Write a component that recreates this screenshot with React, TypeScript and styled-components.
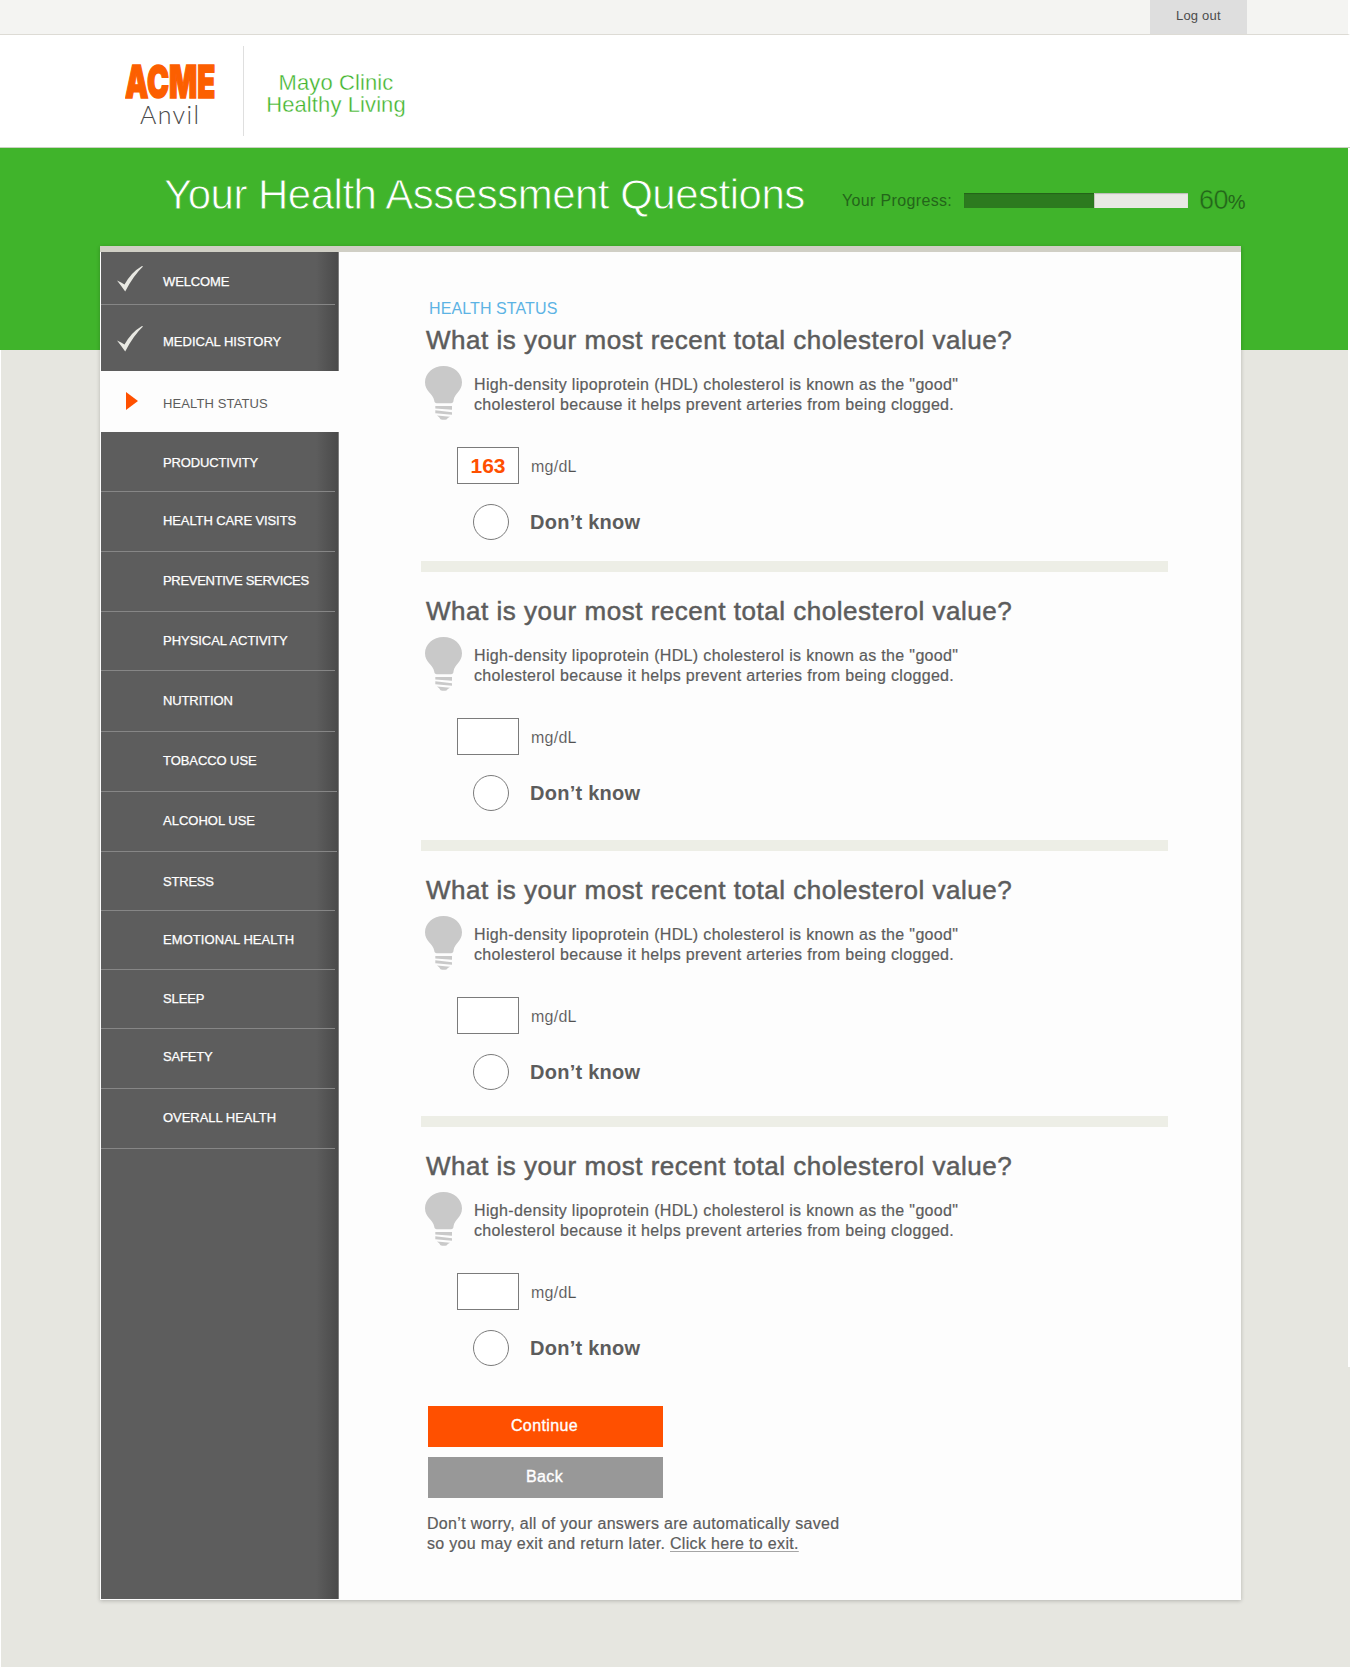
import React from "react";
import styled, { createGlobalStyle } from "styled-components";

const GREEN = "#40b42b";
const PAPER = "#fdfdfd";

const GlobalStyle = createGlobalStyle`
  *, *::before, *::after { box-sizing: border-box; }
  body {
    margin: 0;
    background: #e6e6e0;
    font-family: "Liberation Sans", Arial, Helvetica, sans-serif;
    color: #5c5c5c;
  }
  h1, h2, p, ul { margin: 0; padding: 0; }
`;

const Page = styled.div`
  width: 1350px;
  height: 1667px;
  display: flex;
  flex-direction: column;
`;

const TopBar = styled.div`
  height: 35px;
  padding-right: 101px;
  display: flex;
  justify-content: flex-end;
  background: #f4f4f2;
  border-bottom: 1px solid #dddbd5;
  border-right: 2px solid #fff;
`;

const LogOut = styled.a`
  width: 97px;
  height: 34px;
  padding-left: 26px;
  font-size: 13px;
  line-height: 31px;
  letter-spacing: 0.2px;
  color: #4c4c4c;
  background: #dedede;
`;

const Masthead = styled.header`
  height: 113px;
  padding: 11px 0 0 125px;
  display: flex;
  background: #fff;
  border-bottom: 1px solid #cbd0c3;
`;

const AcmeLogo = styled.div`
  width: 119px;
  height: 90px;
  padding-top: 14px;
  border-right: 1px solid #dfdfdf;
`;

const AcmeWord = styled.div`
  height: 42px;
  font-family: Inter, sans-serif;
  font-weight: 900;
  font-size: 45px;
  line-height: 43px;
  letter-spacing: 0;
  color: #fc5f00;
  -webkit-text-stroke: 1.6px #fc5f00;
  transform: scaleX(0.655);
  transform-origin: 0 50%;
`;

const AnvilWord = styled.div`
  padding-left: 15px;
  font-family: Lato, sans-serif;
  font-weight: 300;
  font-size: 25px;
  line-height: 24px;
  letter-spacing: 1.4px;
  color: #4a4a4a;
`;

const ClinicName = styled.div`
  width: 150px;
  margin: 26px 0 0 17px;
  text-align: center;
  font-size: 22px;
  line-height: 22px;
  letter-spacing: 0.1px;
  color: ${GREEN};
  -webkit-text-stroke: 0.35px #fff;
`;

const Main = styled.main`
  flex: 1;
  padding-left: 100px;
  background:
    linear-gradient(#fff, #fff) right top / 2px 1219px no-repeat,
    linear-gradient(${GREEN}, ${GREEN}) 0 0 / 100% 202px no-repeat,
    linear-gradient(#fff, #fff) 0 202px / 1px 100% no-repeat;
`;

const Hero = styled.div`
  height: 98px;
  padding: 22px 0 0 64px;
  display: flex;
  align-items: flex-start;
`;

const Title = styled.h1`
  width: 678px;
  font-weight: 400;
  font-size: 42px;
  line-height: 50px;
  letter-spacing: -0.5px;
  white-space: nowrap;
  color: #fff;
  -webkit-text-stroke: 0.8px ${GREEN};
`;

const Progress = styled.div`
  height: 20px;
  margin-top: 20px;
  display: flex;
  align-items: center;
  color: #24651a;
`;

const ProgressLabel = styled.span`
  width: 122px;
  padding-top: 1px;
  font-size: 16px;
  letter-spacing: 0.35px;
`;

const Track = styled.div`
  width: 224px;
  height: 15px;
  background: #e9e9e3;
  box-shadow: inset 0 1px 1px rgba(0, 0, 0, 0.2);
`;

const Fill = styled.div`
  height: 15px;
  background: #2c7a1f;
  border-right: 1px solid #c5c8bb;
  box-shadow: inset 0 1px 1px rgba(0, 0, 0, 0.2);
`;

const Percent = styled.span`
  margin-left: 11px;
  font-size: 27px;
  letter-spacing: -0.6px;
  -webkit-text-stroke: 0.5px ${GREEN};
  small {
    font-size: 20px;
    -webkit-text-stroke: 0;
  }
`;

const Card = styled.div`
  width: 1141px;
  height: 1354px;
  display: flex;
  background: ${PAPER};
  border-top: 6px solid #d0cfc5;
  box-shadow: 0 1px 4px rgba(0, 0, 0, 0.22);
`;

const Sidebar = styled.ul`
  width: 239px;
  height: 1347px;
  list-style: none;
  background:
    linear-gradient(${PAPER}, ${PAPER}) 0 0 / 1px 100% no-repeat,
    linear-gradient(#7f7f7f, #7f7f7f) 100% 0 / 1px 100% no-repeat,
    linear-gradient(90deg, #5d5d5d 0, #5d5d5d 216px, #4a4a4a 238px);
`;

const NavItem = styled.li<{
  $h: number;
  $pad: number;
  $line?: number;
  $spacing?: number;
  $active?: boolean;
}>`
  height: ${(p) => p.$h}px;
  padding-top: ${(p) => p.$pad}px;
  display: grid;
  grid-template-columns: 63px 1fr;
  align-items: start;
  font-size: 13px;
  line-height: 16px;
  letter-spacing: ${(p) => p.$spacing ?? -0.12}px;
  white-space: nowrap;
  color: ${(p) => (p.$active ? "#5c5c5c" : "#fff")};
  -webkit-text-stroke: ${(p) => (p.$active ? "0" : "0.25px #fff")};
  background: ${(p) =>
    p.$active
      ? PAPER
      : `linear-gradient(#868686, #868686) 1px 100% / ${p.$line ?? 0}px 1px no-repeat`};
`;

const Mark = styled.span<{ $left: number; $up: number }>`
  height: 16px;
  margin-top: -${(p) => p.$up}px;
  padding-left: ${(p) => p.$left}px;
  display: flex;
  align-items: center;
  svg { flex: none; display: block; }
`;

const Content = styled.section`
  flex: 1;
  padding: 47px 0 0 82px;
`;

const Eyebrow = styled.p`
  height: 26px;
  padding-left: 8px;
  font-size: 16px;
  line-height: 20px;
  letter-spacing: 0.1px;
  color: #5cb3e4;
`;

const Question = styled.div`
  height: 215px;
`;

const QuestionTitle = styled.h2`
  padding-left: 5px;
  font-weight: 400;
  font-size: 26px;
  line-height: 30px;
  letter-spacing: 0.52px;
  -webkit-text-stroke: 0.5px #5c5c5c;
`;

const Hint = styled.div`
  margin-top: 11px;
  padding-left: 4px;
  display: flex;
  svg { display: block; }
`;

const HintText = styled.p`
  margin: 9px 0 0 12px;
  font-size: 16px;
  line-height: 20px;
  letter-spacing: 0.34px;
  -webkit-text-stroke: 0.2px #5c5c5c;
`;

const Answer = styled.label`
  margin-top: 27px;
  padding-left: 36px;
  display: flex;
  align-items: center;
`;

const ValueBox = styled.span`
  width: 62px;
  height: 37px;
  text-align: center;
  font-weight: 700;
  font-size: 21px;
  line-height: 36px;
  color: #ff5000;
  background: #fff;
  border: 1px solid #7b7b7b;
`;

const Unit = styled.span`
  margin-left: 12px;
  padding-top: 2px;
  font-size: 16px;
  letter-spacing: 0.25px;
  color: #505050;
  -webkit-text-stroke: 0.15px ${PAPER};
`;

const Unknown = styled.label`
  margin-top: 20px;
  padding-left: 52px;
  display: flex;
  align-items: center;
  font-weight: 700;
  font-size: 20px;
  line-height: 34px;
  letter-spacing: 0.25px;
`;

const Radio = styled.span`
  width: 36px;
  height: 36px;
  margin-right: 21px;
  background: #fff;
  border: 1px solid #7b7b7b;
  border-radius: 50%;
`;

const Rule = styled.div<{ $gap: number }>`
  width: 747px;
  height: 11px;
  margin: ${(p) => p.$gap}px 0 24px;
  background: #edeee6;
`;

const Actions = styled.div`
  margin: 40px 0 0 7px;
  display: flex;
  flex-direction: column;
  gap: 10px;
`;

const Button = styled.button<{ $tone: string }>`
  width: 235px;
  height: 41px;
  padding: 0 2px 2px 0;
  border: 0;
  font-family: inherit;
  font-size: 16px;
  letter-spacing: 0.4px;
  color: #fff;
  background: ${(p) => p.$tone};
  -webkit-text-stroke: 0.35px #fff;
`;

const SaveNote = styled.p`
  margin: 16px 0 0 6px;
  font-size: 16px;
  line-height: 20px;
  letter-spacing: 0.32px;
  -webkit-text-stroke: 0.2px #5c5c5c;
`;

const ExitLink = styled.a`
  text-decoration: underline;
  text-decoration-color: #a5a5a5;
  text-decoration-thickness: 1px;
  text-decoration-skip-ink: none;
  text-underline-offset: 2px;
`;

const Check = () => (
  <svg width="26" height="26" viewBox="0 0 26 26" fill="#e8e8e2">
    <path d="M0 14.4Q4.500 16.200 7.500 18.600Q14 6.500 25 0L26 .6Q16.500 9.500 8.200 25.600Q4.500 20 0 14.400Z" />
  </svg>
);

const Arrow = () => (
  <svg width="12" height="18" viewBox="0 0 12 18" fill="#ff5000">
    <path d="M0 0L12 9L0 18Z" />
  </svg>
);

const Bulb = () => (
  <svg width="37" height="54" viewBox="0 0 37 54" fill="#c9c9c9">
    <path d="M18.500 0C29 0 37 7.400 37 16.300C37 25.500 29.200 27.500 28.500 34.500Q28.300 37.300 26 37.300H11.800Q9.500 37.300 9.200 34.500C8 27.500 0 25.500 0 16.300C0 7.400 8 0 18.500 0Z" />
    <path d="M10.300 40H27V43.800L10.300 42.500Z" />
    <path d="M10.300 44.200L27 46.200V48.800L10.300 47.300Z" />
    <path d="M12 49.600L25 50.700Q22.500 51.800 21.500 53.400Q18.500 54.400 15.500 53.200Q14.500 51.500 12 49.600Z" />
  </svg>
);

type Nav = {
  label: string;
  h: number;
  pad: number;
  line?: number;
  spacing?: number;
  mark?: "check" | "arrow";
};

const NAV: Nav[] = [
  { label: "WELCOME", h: 53, pad: 22, line: 234, mark: "check" },
  { label: "MEDICAL HISTORY", h: 66, pad: 29, spacing: 0, mark: "check" },
  { label: "HEALTH STATUS", h: 61, pad: 25, spacing: 0.12, mark: "arrow" },
  { label: "PRODUCTIVITY", h: 60, pad: 23, line: 234, spacing: -0.15 },
  { label: "HEALTH CARE VISITS", h: 60, pad: 21, line: 234, spacing: -0.1 },
  { label: "PREVENTIVE SERVICES", h: 60, pad: 21, line: 234, spacing: -0.3 },
  { label: "PHYSICAL ACTIVITY", h: 59, pad: 21, line: 234, spacing: -0.03 },
  { label: "NUTRITION", h: 61, pad: 22, line: 234 },
  { label: "TOBACCO USE", h: 60, pad: 21, line: 236, spacing: -0.07 },
  { label: "ALCOHOL USE", h: 60, pad: 21, line: 236, spacing: 0 },
  { label: "STRESS", h: 59, pad: 22, line: 234, spacing: -0.2 },
  { label: "EMOTIONAL HEALTH", h: 59, pad: 21, line: 234, spacing: 0.07 },
  { label: "SLEEP", h: 59, pad: 21, line: 234 },
  { label: "SAFETY", h: 60, pad: 20, line: 234, spacing: -0.2 },
  { label: "OVERALL HEALTH", h: 60, pad: 21, line: 234, spacing: -0.03 },
];

const QUESTIONS = [
  { value: "163", gap: 21 },
  { value: "", gap: 29 },
  { value: "", gap: 26 },
  { value: "", gap: 0 },
];

const PROGRESS = 58.5;

export default function App() {
  return (
    <Page>
      <GlobalStyle />
      <TopBar>
        <LogOut>Log out</LogOut>
      </TopBar>
      <Masthead>
        <AcmeLogo>
          <AcmeWord>ACME</AcmeWord>
          <AnvilWord>Anvil</AnvilWord>
        </AcmeLogo>
        <ClinicName>
          Mayo Clinic
          <br />
          Healthy Living
        </ClinicName>
      </Masthead>
      <Main>
        <Hero>
          <Title>Your Health Assessment Questions</Title>
          <Progress>
            <ProgressLabel>Your Progress:</ProgressLabel>
            <Track>
              <Fill style={{ width: `${PROGRESS}%` }} />
            </Track>
            <Percent>
              60<small>%</small>
            </Percent>
          </Progress>
        </Hero>
        <Card>
          <Sidebar>
            {NAV.map((n) => (
              <NavItem
                key={n.label}
                $h={n.h}
                $pad={n.pad}
                $line={n.line}
                $spacing={n.spacing}
                $active={n.mark === "arrow"}
              >
                <Mark $left={n.mark === "arrow" ? 26 : 17} $up={3}>
                  {n.mark === "check" && <Check />}
                  {n.mark === "arrow" && <Arrow />}
                </Mark>
                {n.label}
              </NavItem>
            ))}
          </Sidebar>
          <Content>
            <Eyebrow>HEALTH STATUS</Eyebrow>
            {QUESTIONS.map((q, i) => (
              <React.Fragment key={i}>
                <Question>
                  <QuestionTitle>What is your most recent total cholesterol value?</QuestionTitle>
                  <Hint>
                    <Bulb />
                    <HintText>
                      High-density lipoprotein (HDL) cholesterol is known as the "good"
                      <br />
                      cholesterol because it helps prevent arteries from being clogged.
                    </HintText>
                  </Hint>
                  <Answer>
                    <ValueBox>{q.value}</ValueBox>
                    <Unit>mg/dL</Unit>
                  </Answer>
                  <Unknown>
                    <Radio />
                    Don’t know
                  </Unknown>
                </Question>
                {q.gap > 0 && <Rule $gap={q.gap} />}
              </React.Fragment>
            ))}
            <Actions>
              <Button $tone="#ff5000">Continue</Button>
              <Button $tone="#989898">Back</Button>
            </Actions>
            <SaveNote>
              Don’t worry, all of your answers are automatically saved
              <br />
              so you may exit and return later. <ExitLink>Click here to exit.</ExitLink>
            </SaveNote>
          </Content>
        </Card>
      </Main>
    </Page>
  );
}
